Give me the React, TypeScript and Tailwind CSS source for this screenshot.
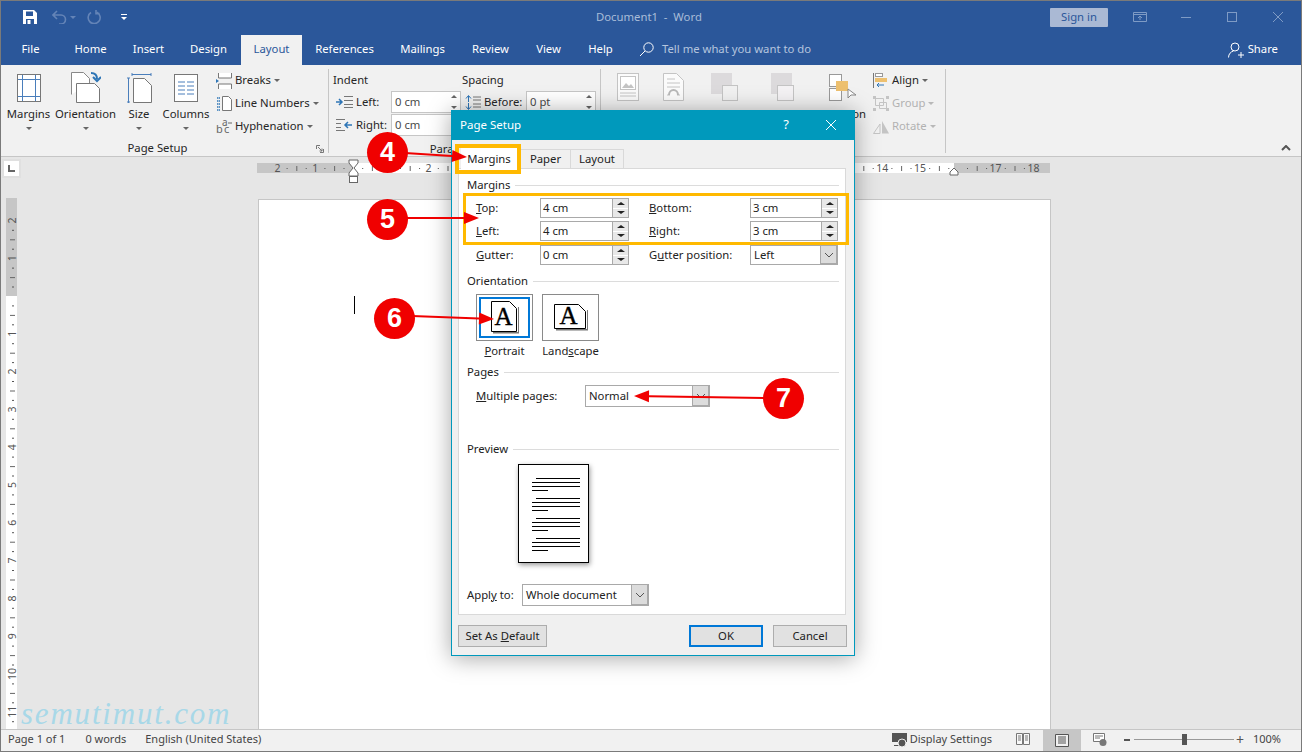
import type { ReactNode } from "react";

const tabs = [
  { name: "File", w: "w-[59px]" },
  { name: "Home", w: "w-[61px]" },
  { name: "Insert", w: "w-[55px]" },
  { name: "Design", w: "w-[65px]" },
  { name: "Layout", w: "w-[61px]", active: true },
  { name: "References", w: "w-[85px]" },
  { name: "Mailings", w: "w-[71px]" },
  { name: "Review", w: "w-[65px]" },
  { name: "View", w: "w-[51px]" },
  { name: "Help", w: "w-[53px]" },
];

function Caret({ className = "" }: { className?: string }) {
  return <span className={`inline-block w-0 h-0 border-x-[3px] border-x-transparent border-t-[3px] border-t-[#666] ${className}`} />;
}

function BigButton({ label, width, children }: { label: string; width: string; children: ReactNode }) {
  return (
    <div className={`${width} flex flex-col items-center shrink-0`}>
      <div className="h-[33px] mt-[6px] flex items-center justify-center">{children}</div>
      <div className="mt-[2px] leading-[16px]">{label}</div>
      <Caret className="mt-[5px] border-t-[#555]" />
    </div>
  );
}

function SmallRow({ icon, label, gray, dis }: { icon: ReactNode; label: string; gray?: boolean; dis?: boolean }) {
  return (
    <div className={`h-[23px] flex items-center whitespace-nowrap ${dis ? "text-[#b1b1b1]" : ""}`}>
      <div className="w-[19px] h-[18px] flex items-center">{icon}</div>
      <span>{label}</span>
      <Caret className={`ml-[3px] ${gray ? "border-t-[#b8b8b8]" : ""}`} />
    </div>
  );
}

function RibbonInput({ value, width }: { value: string; width: string }) {
  return (
    <div className={`${width} h-[22px] bg-white border border-[#c6c6c6] flex items-center justify-between pl-[3px] pr-[3px]`}>
      <span className="text-[#4a4a4a]">{value}</span>
      <div className="flex flex-col gap-[8px]">
        <span className="w-0 h-0 border-x-[3px] border-x-transparent border-b-[3px] border-b-[#666]" />
        <span className="w-0 h-0 border-x-[3px] border-x-transparent border-t-[3px] border-t-[#666]" />
      </div>
    </div>
  );
}

function Ruler() {
  const nums = Array.from({ length: 21 }, (_, i) => i - 2);
  // the numbers under the dialog, the badge and the right indent marker are not visible
  const hidden = (n: number) => n === 0 || n === 1 || n === 16 || (n > 2 && n < 14);
  return (
    <svg width="800" height="24" viewBox="253 159 800 24" className="shrink-0">
      <rect x="257" y="163" width="793" height="10" fill="#c6c6c6" />
      <rect x="353" y="163" width="601" height="10" fill="#fff" />
      {nums.map((n) => {
        const x = 353 + n * 37.8;
        return (
          <g key={n}>
            {!hidden(n) && (
              <text x={x} y="172" textAnchor="middle" fontSize="10.500" fill="#555" fontFamily="'Noto Sans', sans-serif">
                {Math.abs(n)}
              </text>
            )}
            {n < 18 && <rect x={x + 9.2} y="168" width="1" height="1" fill="#555" />}
            {n < 18 && <rect x={x + 18.9} y="166" width="1" height="5" fill="#666" />}
            {n < 18 && <rect x={x + 28.3} y="168" width="1" height="1" fill="#555" />}
          </g>
        );
      })}
      <path d="M349 160h9v3l-4 5 4 5v3h-9v-3l4-5-4-5z" fill="#fff" stroke="#666" />
      <rect x="349.500" y="176.500" width="8" height="6" fill="#fff" stroke="#666" />
      <path d="M950 175h8v-3l-4-4-4 4z" fill="#fff" stroke="#666" />
    </svg>
  );
}

function VRuler() {
  const nums = Array.from({ length: 14 }, (_, i) => i - 2);
  return (
    <svg width="11" height="531" viewBox="6 198 11 531" className="shrink-0">
      <rect x="6" y="198" width="11" height="531" fill="#fff" />
      <rect x="6" y="198" width="11" height="98" fill="#c6c6c6" />
      {nums.map((n) => {
        const y = 296 + n * 37.8;
        return (
          <g key={n}>
            {n !== 0 && (
              <text
                x="0"
                y="0"
                transform={`translate(15.5 ${y}) rotate(-90)`}
                textAnchor="middle"
                fontSize="10.500"
                fill="#555"
                fontFamily="'Noto Sans', sans-serif"
              >
                {Math.abs(n)}
              </text>
            )}
            <rect x="12" y={y + 9.4} width="2" height="1" fill="#555" />
            <rect x="10" y={y + 18.9} width="5" height="1" fill="#666" />
            <rect x="12" y={y + 28.3} width="2" height="1" fill="#555" />
          </g>
        );
      })}
    </svg>
  );
}

function SectionHead({ title, className = "" }: { title: string; className?: string }) {
  return (
    <div className={`h-[16px] flex items-center gap-[5px] ${className}`}>
      <span className="leading-[16px]">{title}</span>
      <div className="flex-1 h-px bg-[#dcdcdc]" />
    </div>
  );
}

function Spin({ value }: { value: string }) {
  return (
    <div className="w-full h-[20px] bg-white border border-[#a9a9a9] flex items-center">
      <span className="flex-1 pl-[2px] leading-[16px]">{value}</span>
      <div className="w-[16px] h-full flex flex-col border-l border-[#a9a9a9] bg-[#e8e8e8]">
        <div className="flex-1 flex items-center justify-center border-b border-white">
          <span className="w-0 h-0 border-x-[4px] border-x-transparent border-b-[3px] border-b-[#222]" />
        </div>
        <div className="flex-1 flex items-center justify-center">
          <span className="w-0 h-0 border-x-[4px] border-x-transparent border-t-[3px] border-t-[#222]" />
        </div>
      </div>
    </div>
  );
}

function Combo({ value, className, height = "h-[22px]" }: { value: string; className: string; height?: string }) {
  return (
    <div className={`${className} ${height} bg-white border border-[#a9a9a9] flex items-center`}>
      <span className="flex-1 pl-[3px] leading-[16px]">{value}</span>
      <div className="w-[17px] h-full bg-[#dcdcdc] border-l border-[#a9a9a9] border-r border-b flex items-center justify-center">
        <svg width="10" height="6" viewBox="0 0 10 6">
          <path d="M1 1l4 4 4-4" fill="none" stroke="#555" />
        </svg>
      </div>
    </div>
  );
}

function DocIcon({ landscape }: { landscape?: boolean }) {
  const w = landscape ? 31 : 25;
  const h = landscape ? 25 : 31;
  return (
    <svg width={w + 3} height={h + 3} viewBox={`0 0 ${w + 3} ${h + 3}`}>
      <path d={`M2 ${h}h${w}V6h1.500V${h + 1.5}H2z`} fill="#777" />
      <path d={`M.5.5h${w - 7}l7 7V${h - 0.5}H.5z`} fill="#fff" stroke="#000" />
      <path d={`M${w - 7}.5v7h7`} fill="#fff" stroke="#000" />
      <text
        x={landscape ? 14.5 : 12.5}
        y={landscape ? h - 5 : h - 7}
        textAnchor="middle"
        fontSize="25"
        stroke="#000"
        strokeWidth=".4"
        fontFamily="'Liberation Serif', serif"
      >
        A
      </text>
    </svg>
  );
}

function PreviewPage() {
  const block = [
    [4, 44],
    [0, 48],
    [0, 48],
    [0, 16],
  ];
  return (
    <div className="w-[71px] h-[99px] ml-[51px] mt-[7px] bg-white border border-black shadow-[1px_2px_5px_rgba(0,0,0,0.4)] pt-[13px] pl-[13px] flex flex-col gap-[7px]">
      {[0, 1, 2, 3].map((g) => (
        <div key={g} className="flex flex-col gap-[3px]">
          {block.map(([ml, w], i) => (
            <div key={i} className="h-px bg-black" style={{ marginLeft: ml, width: w }} />
          ))}
        </div>
      ))}
    </div>
  );
}

function Dialog() {
  return (
    <div className="absolute left-[450px] top-[109px] w-[404px] h-[546px] bg-[#f0f0f0] border border-[#0099bc] shadow-[0_2px_22px_rgba(0,0,0,0.35)] flex flex-col text-[#222]">
      <div className="h-[29px] shrink-0 bg-[#0099bc] text-white flex items-center pl-[8px] pb-[1px]">
        <span className="flex-1 text-[11.5px]">Page Setup</span>
        <span className="text-[13px] w-[16px] text-center">?</span>
        <svg width="12" height="12" viewBox="0 0 12 12" className="ml-[31px] mr-[17px]">
          <path d="M1 1l10 10M11 1L1 11" stroke="#fff" strokeWidth="1" />
        </svg>
      </div>
      <div className="flex items-end h-[28px] pl-[9px] shrink-0">
        <div className="w-[56px] h-[23px] pt-[3px] bg-white flex items-center justify-center -mb-px relative">Margins</div>
        <div className="w-[51px] h-[19px] pt-[1px] ml-[3px] border border-b-0 border-[#d9d9d9] flex items-center justify-center">Paper</div>
        <div className="w-[54px] h-[19px] pt-[1px] -ml-px border border-b-0 border-[#d9d9d9] flex items-center justify-center">Layout</div>
      </div>
      <div className="ml-[6px] mr-[8px] h-[447px] shrink-0 bg-white border border-[#d9d9d9] pl-[8px] pr-[6px] flex flex-col">
        <SectionHead title="Margins" className="mt-[8px]" />
        <div className="mt-[5px] flex items-center h-[20px] pl-[9px]">
          <span className="w-[64px]"><u>T</u>op:</span>
          <div className="w-[89px]"><Spin value="4 cm" /></div>
          <span className="w-[121px] pl-[20px]"><u>B</u>ottom:</span>
          <div className="w-[88px]"><Spin value="3 cm" /></div>
        </div>
        <div className="mt-[3px] flex items-center h-[20px] pl-[9px]">
          <span className="w-[64px]"><u>L</u>eft:</span>
          <div className="w-[89px]"><Spin value="4 cm" /></div>
          <span className="w-[121px] pl-[20px]"><u>R</u>ight:</span>
          <div className="w-[88px]"><Spin value="3 cm" /></div>
        </div>
        <div className="mt-[4px] flex items-center h-[20px] pl-[9px]">
          <span className="w-[64px]"><u>G</u>utter:</span>
          <div className="w-[89px]"><Spin value="0 cm" /></div>
          <span className="w-[121px] pl-[20px] whitespace-nowrap">G<u>u</u>tter position:</span>
          <Combo value="Left" className="w-[88px]" height="h-[20px]" />
        </div>
        <SectionHead title="Orientation" className="mt-[8px]" />
        <div className="mt-[5px] flex gap-[9px] pl-[9px]">
          <div className="w-[57px] h-[47px] border border-[#8a8a8a] flex items-center justify-center relative">
            <div className="absolute inset-[2px] border-2 border-[#0078d7]" />
            <DocIcon />
          </div>
          <div className="w-[57px] h-[47px] border border-[#8a8a8a] flex items-center justify-center">
            <DocIcon landscape />
          </div>
        </div>
        <div className="mt-[2px] flex gap-[9px] pl-[9px] leading-[16px]">
          <span className="w-[57px] text-center"><u>P</u>ortrait</span>
          <span className="w-[57px] text-center whitespace-nowrap">Land<u>s</u>cape</span>
        </div>
        <SectionHead title="Pages" className="mt-[5px]" />
        <div className="mt-[5px] flex items-center pl-[9px]">
          <span className="w-[109px] whitespace-nowrap"><u>M</u>ultiple pages:</span>
          <Combo value="Normal" className="w-[125px]" />
        </div>
        <SectionHead title="Preview" className="mt-[34px]" />
        <PreviewPage />
        <div className="mt-[21px] flex items-center">
          <span className="w-[55px] whitespace-nowrap">Appl<u>y</u> to:</span>
          <Combo value="Whole document" className="w-[127px]" />
        </div>
      </div>
      <div className="mt-[10px] ml-[6px] mr-[7px] flex items-center h-[22px]">
        <div className="w-[89px] h-full bg-[#e1e1e1] border border-[#adadad] flex items-center justify-center whitespace-nowrap">
          <span>Set As <u>D</u>efault</span>
        </div>
        <div className="w-[74px] h-full ml-auto bg-[#e1e1e1] border-2 border-[#0078d7] flex items-center justify-center">OK</div>
        <div className="w-[74px] h-full ml-[10px] bg-[#e1e1e1] border border-[#adadad] flex items-center justify-center">Cancel</div>
      </div>
    </div>
  );
}

function Badge({ n, className }: { n: number; className: string }) {
  return (
    <div className={`absolute w-[41px] h-[41px] rounded-full bg-[#f00000] text-white flex items-center justify-center text-[27px] font-bold font-['Liberation_Sans',sans-serif] ${className}`}>
      {n}
    </div>
  );
}

function Arrows() {
  const lines: [number, number, number, number][] = [
    [405, 153, 467, 157],
    [405, 218, 479, 218],
    [412, 316, 494, 319],
    [765, 398, 634, 396],
  ];
  return (
    <svg width="1302" height="752" viewBox="0 0 1302 752" className="absolute left-[-1px] top-[-1px] pointer-events-none">
      {lines.map(([x1, y1, x2, y2], i) => {
        const a = Math.atan2(y2 - y1, x2 - x1);
        const bx = x2 - Math.cos(a) * 15;
        const by = y2 - Math.sin(a) * 15;
        const nx = -Math.sin(a) * 6;
        const ny = Math.cos(a) * 6;
        return (
          <g key={i}>
            <line x1={x1} y1={y1} x2={bx} y2={by} stroke="#f00000" strokeWidth="2" />
            <path d={`M${x2} ${y2}L${bx + nx} ${by + ny}L${bx - nx} ${by - ny}z`} fill="#f00000" />
          </g>
        );
      })}
    </svg>
  );
}

export default function App() {
  return (
    <div className="relative w-[1302px] h-[752px] overflow-hidden border border-[#7a7a7a] flex flex-col bg-[#e6e6e6] text-[11.3px] text-[#262626] font-['Noto_Sans',sans-serif]">
      {/* Title bar */}
      <div className="h-[32px] shrink-0 bg-[#2b579a] flex items-center relative">
        <svg width="14" height="14" viewBox="0 0 14 14" className="ml-[22px]">
          <path d="M0 0h11l3 3v11H0z" fill="#fff" />
          <rect x="3" y="1.500" width="7" height="4.500" fill="#2b579a" />
          <rect x="3" y="9" width="8" height="5" fill="#2b579a" />
          <rect x="4.500" y="10" width="3" height="4" fill="#fff" />
        </svg>
        <svg width="15" height="14" viewBox="0 0 15 14" className="ml-[15px]">
          <path d="M5 1L1 5l4 4M1 5h8a4.500 4.500 0 010 9H7" fill="none" stroke="#6484b7" strokeWidth="1.600" />
        </svg>
        <Caret className="ml-[3px] border-t-[#6484b7]" />
        <svg width="14" height="14" viewBox="0 0 14 14" className="ml-[11px]">
          <path d="M4 2.500A6 6 0 1010 2.300M9 0v3.600h3.500" fill="none" stroke="#6484b7" strokeWidth="1.600" />
        </svg>
        <div className="ml-[20px] flex flex-col items-center gap-[2px]">
          <div className="w-[6px] h-px bg-white" />
          <Caret className="border-t-white" />
        </div>
        <div className="absolute left-[595px] text-[#a8bcd8] whitespace-nowrap">Document1&nbsp; -&nbsp; Word</div>
        <div className="ml-auto w-[58px] h-[19px] bg-[#aab9d4] rounded-[1px] text-[#2b579a] flex items-center justify-center">Sign in</div>
        <svg width="14" height="10" viewBox="0 0 14 10" className="ml-[25px]">
          <path d="M.5.5h13v9H.5zM.5 2.500h13M7 8V4M5 6l2-2 2 2" fill="none" stroke="#7f9bc5" />
        </svg>
        <div className="ml-[34px] w-[10px] h-px bg-[#7f9bc5]" />
        <div className="ml-[36px] w-[10px] h-[10px] border border-[#7f9bc5]" />
        <svg width="10" height="10" viewBox="0 0 10 10" className="ml-[36px] mr-[18px]">
          <path d="M0 0l10 10M10 0L0 10" stroke="#7f9bc5" />
        </svg>
      </div>

      {/* Tab row */}
      <div className="h-[32px] shrink-0 bg-[#2b579a] flex items-end text-white">
        {tabs.map((t) => (
          <div key={t.name} className={`${t.w} h-[30px] pb-[1px] flex items-center justify-center ${t.active ? "bg-[#f1f1f1] text-[#2b579a]" : ""}`}>
            {t.name}
          </div>
        ))}
        <div className="h-[30px] pb-[1px] flex items-center ml-[12px] text-[#b5c5de]">
          <svg width="15" height="15" viewBox="0 0 15 15">
            <circle cx="9.500" cy="5.500" r="4.700" fill="none" stroke="#fff" />
            <path d="M6 9l-5 5" stroke="#fff" />
          </svg>
          <span className="ml-[8px]">Tell me what you want to do</span>
        </div>
        <div className="h-[30px] pb-[1px] flex items-center ml-auto mr-[23px]">
          <svg width="16" height="16" viewBox="0 0 16 16">
            <circle cx="7" cy="5" r="4" fill="none" stroke="#fff" />
            <path d="M.5 15.500c0-3.500 2.500-6 5-6.500M10 13h6M13 10v6" fill="none" stroke="#fff" />
          </svg>
          <span className="ml-[4px]">Share</span>
        </div>
      </div>

      {/* Ribbon */}
      <div className="h-[92px] shrink-0 bg-[#f1f1f1] border-b border-[#c6c6c6] flex relative">
        {/* Page Setup */}
        <div className="w-[327px] shrink-0 flex flex-col relative">
          <div className="flex pl-[3px] h-[78px]">
            <BigButton label="Margins" width="w-[49px]">
              <svg width="24" height="28" viewBox="0 0 24 28">
                <rect x=".5" y=".5" width="23" height="27" fill="#fff" stroke="#777" />
                <path d="M5.500 1v26M18.500 1v26M1 5.500h22M1 22.500h22" stroke="#4a7ebb" />
              </svg>
            </BigButton>
            <BigButton label="Orientation" width="w-[65px]">
              <svg width="30" height="31" viewBox="0 0 30 31">
                <path d="M.5 22.500V.5h12l6 6v5" fill="#fff" stroke="#888" />
                <path d="M5.500 30.500v-19h18l5 5v14z" fill="#fff" stroke="#777" />
                <path d="M20 1c4 0 6 2 6 6" fill="none" stroke="#2e75b6" strokeWidth="2" />
                <path d="M22 5l4 4 4-4" fill="none" stroke="#2e75b6" strokeWidth="2" />
              </svg>
            </BigButton>
            <BigButton label="Size" width="w-[42px]">
              <svg width="25" height="30" viewBox="0 0 25 30">
                <path d="M6.500 29.500V5.500h11l7 7v17z" fill="#fff" stroke="#777" />
                <path d="M5 1.500h19M5 0v3M24 0v3M1.500 5v25M0 5h3M0 29h3" stroke="#4a7ebb" />
              </svg>
            </BigButton>
            <BigButton label="Columns" width="w-[52px]">
              <svg width="24" height="28" viewBox="0 0 24 28">
                <rect x=".5" y=".5" width="23" height="27" fill="#fff" stroke="#777" />
                <path d="M4 8h7M13 8h7M4 12h7M13 12h7M4 16h7M13 16h7M4 20h7M13 20h7" stroke="#4a7ebb" />
              </svg>
            </BigButton>
            <div className="ml-[4px] pt-[4px] flex flex-col">
              <SmallRow
                label="Breaks"
                icon={
                  <svg width="16" height="16" viewBox="0 0 16 16">
                    <path d="M2.500 0v5h13V0M2.500 16v-5h13v5" fill="#fff" stroke="#777" />
                    <path d="M0 6v4l3-2z" fill="#2e75b6" />
                  </svg>
                }
              />
              <SmallRow
                label="Line Numbers"
                icon={
                  <svg width="16" height="15" viewBox="0 0 16 15">
                    <path d="M6.500 14.500V.5h6l3 3v11z" fill="#fff" stroke="#777" />
                    <path d="M1 2h3M1 5h3M1 8h3M1 11h3M1 14h3" stroke="#2e75b6" strokeWidth="1.400" strokeDasharray="1.500 .5" />
                  </svg>
                }
              />
              <SmallRow
                label="Hyphenation"
                icon={
                  <svg width="16" height="18" viewBox="0 0 16 18" className="overflow-visible">
                    <text x="0" y="15" fontSize="11" fill="#666" fontFamily="'Noto Sans', sans-serif">b</text>
                    <text x="8" y="15" fontSize="11" fill="#666" fontFamily="'Noto Sans', sans-serif">c</text>
                    <text x="6" y="8" fontSize="10" fill="#666" fontFamily="'Noto Sans', sans-serif">a</text>
                    <path d="M12 5h4" stroke="#666" />
                  </svg>
                }
              />
            </div>
          </div>
          <div className="text-center leading-[16px] pr-[14px]">Page Setup</div>
          <svg width="8" height="8" viewBox="0 0 8 8" className="absolute right-[4px] bottom-[3px]">
            <path d="M.5 4V.5H4M7.500 4v3.500H4M2 2l4 4M6 3.500V6H3.500" fill="none" stroke="#777" />
          </svg>
        </div>
        <div className="w-px h-[84px] mt-[4px] bg-[#c6c6c6] shrink-0" />

        {/* Paragraph */}
        <div className="w-[271px] shrink-0 flex flex-col pl-[4px] relative">
          <div className="flex h-[26px] items-end">
            <span className="w-[129px] leading-[16px] pb-[3px]">Indent</span>
            <span className="leading-[16px] pb-[3px]">Spacing</span>
          </div>
          <div className="flex">
            <div className="w-[129px] flex flex-col gap-px">
              <div className="flex items-center h-[22px]">
                <svg width="17" height="12" viewBox="0 0 17 12" className="ml-[3px]">
                  <path d="M8 .5h9M8 4.500h9M8 8.500h9M8 11.500h9" stroke="#777" />
                  <path d="M0 6h5M3 3l3 3-3 3" fill="none" stroke="#2e75b6" strokeWidth="1.500" />
                </svg>
                <span className="ml-[3px] w-[35px]">Left:</span>
                <RibbonInput value="0 cm" width="w-[70px]" />
              </div>
              <div className="flex items-center h-[22px]">
                <svg width="17" height="12" viewBox="0 0 17 12" className="ml-[3px]">
                  <path d="M0 .5h9M0 4.500h5M0 8.500h5M0 11.500h9" stroke="#777" />
                  <path d="M16 6h-6M12 3L9 6l3 3" fill="none" stroke="#2e75b6" strokeWidth="1.500" />
                </svg>
                <span className="ml-[3px] w-[35px]">Right:</span>
                <RibbonInput value="0 cm" width="w-[70px]" />
              </div>
            </div>
            <div className="flex items-center h-[22px]">
              <svg width="16" height="15" viewBox="0 0 16 15" className="ml-[3px]">
                <path d="M3.500 1v6M1 3.500l2.500-3 2.500 3M3.500 8v6M1 11.500l2.500 3 2.500-3" fill="none" stroke="#2e75b6" />
                <path d="M8 2h8M8 5h8M8 9h8M8 12h8" stroke="#777" />
              </svg>
              <span className="ml-[3px] w-[42px]">Before:</span>
              <RibbonInput value="0 pt" width="w-[70px]" />
            </div>
          </div>
          <div className="absolute bottom-[-1px] left-0 w-full text-center leading-[16px] pr-[14px]">Paragraph</div>
        </div>
        <div className="w-px h-[84px] mt-[4px] bg-[#c6c6c6] shrink-0" />

        {/* Arrange */}
        <div className="w-[344px] shrink-0 flex pt-[8px] relative">
          <svg width="256" height="30" viewBox="0 0 256 30" className="ml-[16px]">
            <rect x=".5" y=".5" width="21" height="27" fill="#fbfbfb" stroke="#c4c4c4" />
            <rect x="3.500" y="3.500" width="15" height="13" fill="#fff" stroke="#c4c4c4" />
            <path d="M5 15l4-5 3 3 2-2 3 4z" fill="#c4c4c4" />
            <path d="M3 20h16M3 23h16" stroke="#c4c4c4" />
            <path d="M46.500.5h13l7 7v20h-20z" fill="#fbfbfb" stroke="#c4c4c4" />
            <path d="M50 6h8M50 10h13M50 14h13M50 22h3M60 22h3" stroke="#c4c4c4" />
            <path d="M52 22a4.500 5 0 019 0" fill="none" stroke="#b8b8b8" strokeWidth="2" />
            <rect x="94" y="0" width="21" height="21" fill="#dcdadc" />
            <rect x="105.500" y="12.500" width="15" height="15" fill="#f1f1f1" stroke="#c4c4c4" />
            <rect x="154" y="0" width="21" height="21" fill="#dcdadc" />
            <rect x="160.500" y="12.500" width="16" height="15" fill="#f4f2f4" stroke="#c4c4c4" />
            <rect x="212.500" y="1.500" width="12" height="12" fill="#fff" stroke="#999" />
            <rect x="212.500" y="15.500" width="12" height="12" fill="#fff" stroke="#999" />
            <rect x="219" y="8" width="12" height="10" fill="#edc06f" />
            <path d="M231 16v9l3-3h5z" fill="#fff" stroke="#888" />
          </svg>
          <span className="absolute left-[205px] top-[41px] w-[60px] text-right leading-[16px]">Selection</span>
          <div className="absolute left-[272px] top-[4px] flex flex-col">
            <SmallRow
              label="Align"
              icon={
                <svg width="15" height="15" viewBox="0 0 15 15">
                  <path d="M.5 0v15" stroke="#777" />
                  <rect x="2.500" y=".5" width="7" height="3" fill="#fff" stroke="#999" />
                  <rect x="2" y="5" width="12" height="4" fill="#edc06f" />
                  <path d="M11 12H4M6 10l-2 2 2 2" fill="none" stroke="#2e75b6" />
                </svg>
              }
            />
            <SmallRow
              dis
              gray
              label="Group"
              icon={
                <svg width="16" height="15" viewBox="0 0 16 15">
                  <path d="M2.500 2.500h8v7h-8zM6.500 6.500h7v6h-7z" fill="none" stroke="#c4c4c4" />
                  <path d="M0 0h3v3H0zM13 0h3v3h-3zM0 12h3v3H0zM13 12h3v3h-3z" fill="#c4c4c4" />
                </svg>
              }
            />
            <SmallRow
              dis
              gray
              label="Rotate"
              icon={
                <svg width="16" height="14" viewBox="0 0 16 14">
                  <path d="M.5 13.500L7 4v9.500z" fill="none" stroke="#c4c4c4" />
                  <path d="M9 1l7 12.500H9z" fill="#c4c4c4" />
                </svg>
              }
            />
          </div>
        </div>
        <div className="w-px h-[84px] mt-[4px] bg-[#c6c6c6] shrink-0" />
        <svg width="10" height="6" viewBox="0 0 10 6" className="absolute right-[10px] bottom-[5px]">
          <path d="M1 5l4-4 4 4" fill="none" stroke="#555" strokeWidth="2" />
        </svg>
      </div>

      {/* Document area */}
      <div className="flex-1 min-h-0 overflow-hidden flex flex-col relative">
        <div className="h-[41px] shrink-0 flex items-start">
          <div className="ml-[3px] mt-[4px] w-[15px] h-[15px] bg-white flex items-center justify-center shadow-[0_0_0_2px_#e0e0e0]">
            <svg width="7" height="7" viewBox="0 0 7 7">
              <path d="M1 0v6h6" fill="none" stroke="#666" strokeWidth="2" />
            </svg>
          </div>
          <div className="ml-[234px] mt-[2px]">
            <Ruler />
          </div>
        </div>
        <div className="flex-1 min-h-0 flex items-start pl-[5px]">
          <VRuler />
          <div className="ml-[241px] mt-[1px] w-[793px] h-[540px] bg-white border border-[#c6c6c6] relative">
            <div className="absolute left-[95px] top-[96px] w-px h-[18px] bg-black" />
          </div>
        </div>
      </div>

      {/* Status bar */}
      <div className="h-[22px] shrink-0 bg-[#f1f1f1] border-t border-[#c6c6c6] flex items-center text-[#444] text-[11px] pb-[2px]">
        <span className="ml-[7px]">Page 1 of 1</span>
        <span className="ml-[20px]">0 words</span>
        <span className="ml-[19px]">English (United States)</span>
        <svg width="15" height="14" viewBox="0 0 15 14" className="ml-auto">
          <path d="M0 0h15v9H0zM2 12h6v1H2z" fill="#555" />
          <circle cx="10" cy="10" r="4" fill="#555" stroke="#f1f1f1" />
        </svg>
        <span className="ml-[3px]">Display Settings</span>
        <svg width="14" height="13" viewBox="0 0 14 13" className="ml-[24px]">
          <path d="M.5.5h6v11h-6zM7.500.5h6v11h-6zM2 3h3M2 5h3M2 7h3M9 3h3M9 5h3M9 7h3" fill="#f8f8f8" stroke="#777" />
        </svg>
        <div className="ml-[13px] w-[38px] h-[21px] -mb-[2px] bg-[#c6c6c6] flex items-center justify-center">
          <svg width="14" height="13" viewBox="0 0 14 13">
            <path d="M.5.5h13v12H.5zM3 3h8M3 5h8M3 7h8M3 9h8" fill="#f1f1f1" stroke="#555" />
          </svg>
        </div>
        <svg width="14" height="13" viewBox="0 0 14 13" className="ml-[12px]">
          <path d="M.5.5h11v8H.5zM2 3h8M2 5h5" fill="#fff" stroke="#777" />
          <circle cx="10" cy="9.500" r="3.500" fill="#777" />
        </svg>
        <div className="ml-[17px] w-[6px] h-[2px] bg-[#555]" />
        <div className="ml-[4px] w-[100px] h-px bg-[#999] relative">
          <div className="absolute left-[48px] -top-[5px] w-[5px] h-[11px] bg-[#555]" />
        </div>
        <span className="ml-[2px] text-[14px] leading-none text-[#555]">+</span>
        <span className="ml-[9px] mr-[20px]">100%</span>
      </div>

      <Dialog />

      {/* Annotations on top of the screenshot */}
      <div className="absolute left-[20px] top-[695px] text-[31px] tracking-[1.8px] italic text-[#a8d8e8] font-['Liberation_Serif',serif] leading-[36px]">
        semutimut.com
      </div>
      <div className="absolute left-[454px] top-[143px] w-[66px] h-[30px] border-[4px] border-[#ffb900]" />
      <div className="absolute left-[462px] top-[192px] w-[386px] h-[52px] border-[3px] border-[#ffb900]" />
      <Arrows />
      <Badge n={4} className="left-[366px] top-[131px]" />
      <Badge n={5} className="left-[366px] top-[198px]" />
      <Badge n={6} className="left-[373px] top-[297px]" />
      <Badge n={7} className="left-[762px] top-[377px]" />
    </div>
  );
}
